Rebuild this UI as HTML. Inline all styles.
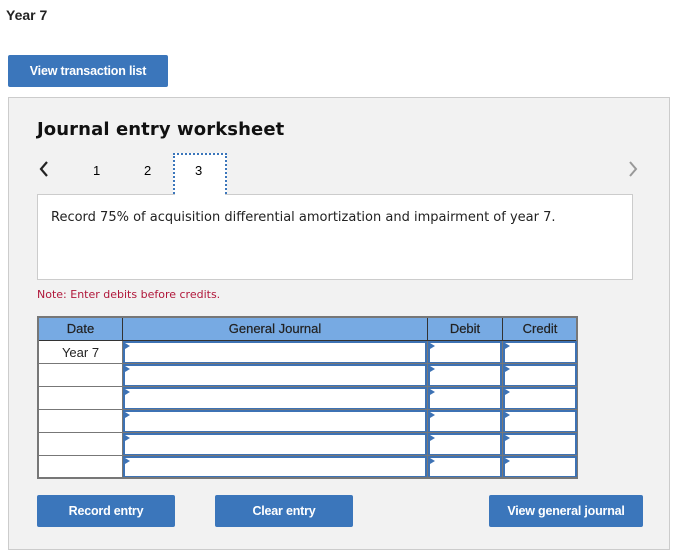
<!DOCTYPE html>
<html><head><style>
body{margin:0;width:675px;height:552px;background:#fff;position:relative;font-family:"Liberation Sans",Arial,sans-serif;overflow:hidden}
.a{position:absolute}
.btn{position:absolute;background:#3b76bb;color:#fff;font-weight:bold;font-size:12.5px;text-align:center;border-radius:2px;letter-spacing:-0.2px}
.ver{font-family:"DejaVu Sans",Verdana,sans-serif}
.in{position:absolute;background:#fff;box-sizing:border-box;border:2px solid #3d72b4;border-bottom-width:1px}
.tri{position:absolute;left:0;top:0;width:0;height:0;border-left:5px solid #3d72b4;border-top:3px solid transparent;border-bottom:3px solid transparent}
.h{position:absolute;text-align:center;font-size:13px;color:#222;-webkit-text-stroke:0.2px #222}
</style></head><body>
<div class="a" style="left:6px;top:7px;font-weight:bold;font-size:14px;color:#222">Year 7</div>
<div class="btn" style="left:8px;top:55px;width:160px;height:32px;line-height:32px">View transaction list</div>
<div class="a" style="left:8px;top:97px;width:662px;height:453px;background:#f2f2f2;border:1px solid #ccc;box-sizing:border-box"></div>
<div class="a ver" style="left:37px;top:119px;font-size:18px;font-weight:bold;color:#111;letter-spacing:0.1px">Journal entry worksheet</div>
<svg class="a" style="left:38px;top:160px" width="12" height="18"><path d="M9 2 L3 9 L9 16" stroke="#222" stroke-width="2.2" fill="none"/></svg>
<div class="a" style="left:93px;top:163px;font-size:13px">1</div>
<div class="a" style="left:144px;top:163px;font-size:13px">2</div>
<div class="a" style="left:173px;top:153px;width:54px;height:44px;background:#fff;border:2px dotted #3b76bb;box-sizing:border-box"></div>
<div class="a" style="left:195px;top:163px;font-size:13px">3</div>
<svg class="a" style="left:627px;top:160px" width="12" height="18"><path d="M3 2 L9 9 L3 16" stroke="#999" stroke-width="2" fill="none"/></svg>
<div class="a" style="left:37px;top:194px;width:596px;height:86px;background:#fff;border:1px solid #ccc;box-sizing:border-box"></div>
<div class="a" style="left:175px;top:194px;width:50px;height:2px;background:#fff"></div>
<div class="a ver" style="left:51px;top:209px;font-size:13px;color:#222;line-height:17px">Record 75% of acquisition differential amortization and impairment of year 7.</div>
<div class="a ver" style="left:37px;top:288px;font-size:11px;color:#b0173a">Note: Enter debits before credits.</div>

<div class="a" style="left:37px;top:316px;width:541px;height:163px;background:#fff;border:2px solid #777;box-sizing:border-box"></div>
<div class="a" style="left:39px;top:318px;width:537px;height:23px;background:#77aae3;border-bottom:1px solid #333;box-sizing:border-box"></div>
<div class="a" style="left:122px;top:318px;width:1px;height:23px;background:#333"></div>
<div class="a" style="left:427px;top:318px;width:1px;height:23px;background:#333"></div>
<div class="a" style="left:502px;top:318px;width:1px;height:23px;background:#333"></div>
<div class="h" style="left:39px;top:321px;width:83px">Date</div>
<div class="h" style="left:123px;top:321px;width:304px">General Journal</div>
<div class="h" style="left:428px;top:321px;width:74px">Debit</div>
<div class="h" style="left:503px;top:321px;width:74px">Credit</div>
<div class="a" style="left:39px;top:345px;width:83px;text-align:center;font-size:13px;color:#222">Year 7</div>

<div class="a" style="left:122px;top:341px;width:2px;height:136px;background:#777"></div>
<div class="a" style="left:39px;top:363px;width:84px;height:1px;background:#777"></div>
<div class="a" style="left:39px;top:386px;width:84px;height:1px;background:#777"></div>
<div class="a" style="left:39px;top:409px;width:84px;height:1px;background:#777"></div>
<div class="a" style="left:39px;top:432px;width:84px;height:1px;background:#777"></div>
<div class="a" style="left:39px;top:455px;width:84px;height:1px;background:#777"></div>

<div class="a" style="left:123px;top:341px;width:454px;height:136px;background:#777"></div>
<div class="in" style="left:123px;top:341px;width:304px;height:22px"><div class="tri"></div></div>
<div class="in" style="left:428px;top:341px;width:74px;height:22px"><div class="tri"></div></div>
<div class="in" style="left:503px;top:341px;width:74px;height:22px"><div class="tri"></div></div>
<div class="in" style="left:123px;top:364px;width:304px;height:22px"><div class="tri"></div></div>
<div class="in" style="left:428px;top:364px;width:74px;height:22px"><div class="tri"></div></div>
<div class="in" style="left:503px;top:364px;width:74px;height:22px"><div class="tri"></div></div>
<div class="in" style="left:123px;top:387px;width:304px;height:22px"><div class="tri"></div></div>
<div class="in" style="left:428px;top:387px;width:74px;height:22px"><div class="tri"></div></div>
<div class="in" style="left:503px;top:387px;width:74px;height:22px"><div class="tri"></div></div>
<div class="in" style="left:123px;top:410px;width:304px;height:22px"><div class="tri"></div></div>
<div class="in" style="left:428px;top:410px;width:74px;height:22px"><div class="tri"></div></div>
<div class="in" style="left:503px;top:410px;width:74px;height:22px"><div class="tri"></div></div>
<div class="in" style="left:123px;top:433px;width:304px;height:22px"><div class="tri"></div></div>
<div class="in" style="left:428px;top:433px;width:74px;height:22px"><div class="tri"></div></div>
<div class="in" style="left:503px;top:433px;width:74px;height:22px"><div class="tri"></div></div>
<div class="in" style="left:123px;top:456px;width:304px;height:21px"><div class="tri"></div></div>
<div class="in" style="left:428px;top:456px;width:74px;height:21px"><div class="tri"></div></div>
<div class="in" style="left:503px;top:456px;width:74px;height:21px"><div class="tri"></div></div>

<div class="btn" style="left:37px;top:495px;width:138px;height:32px;line-height:32px">Record entry</div>
<div class="btn" style="left:215px;top:495px;width:138px;height:32px;line-height:32px">Clear entry</div>
<div class="btn" style="left:489px;top:495px;width:154px;height:32px;line-height:32px">View general journal</div>
</body></html>
